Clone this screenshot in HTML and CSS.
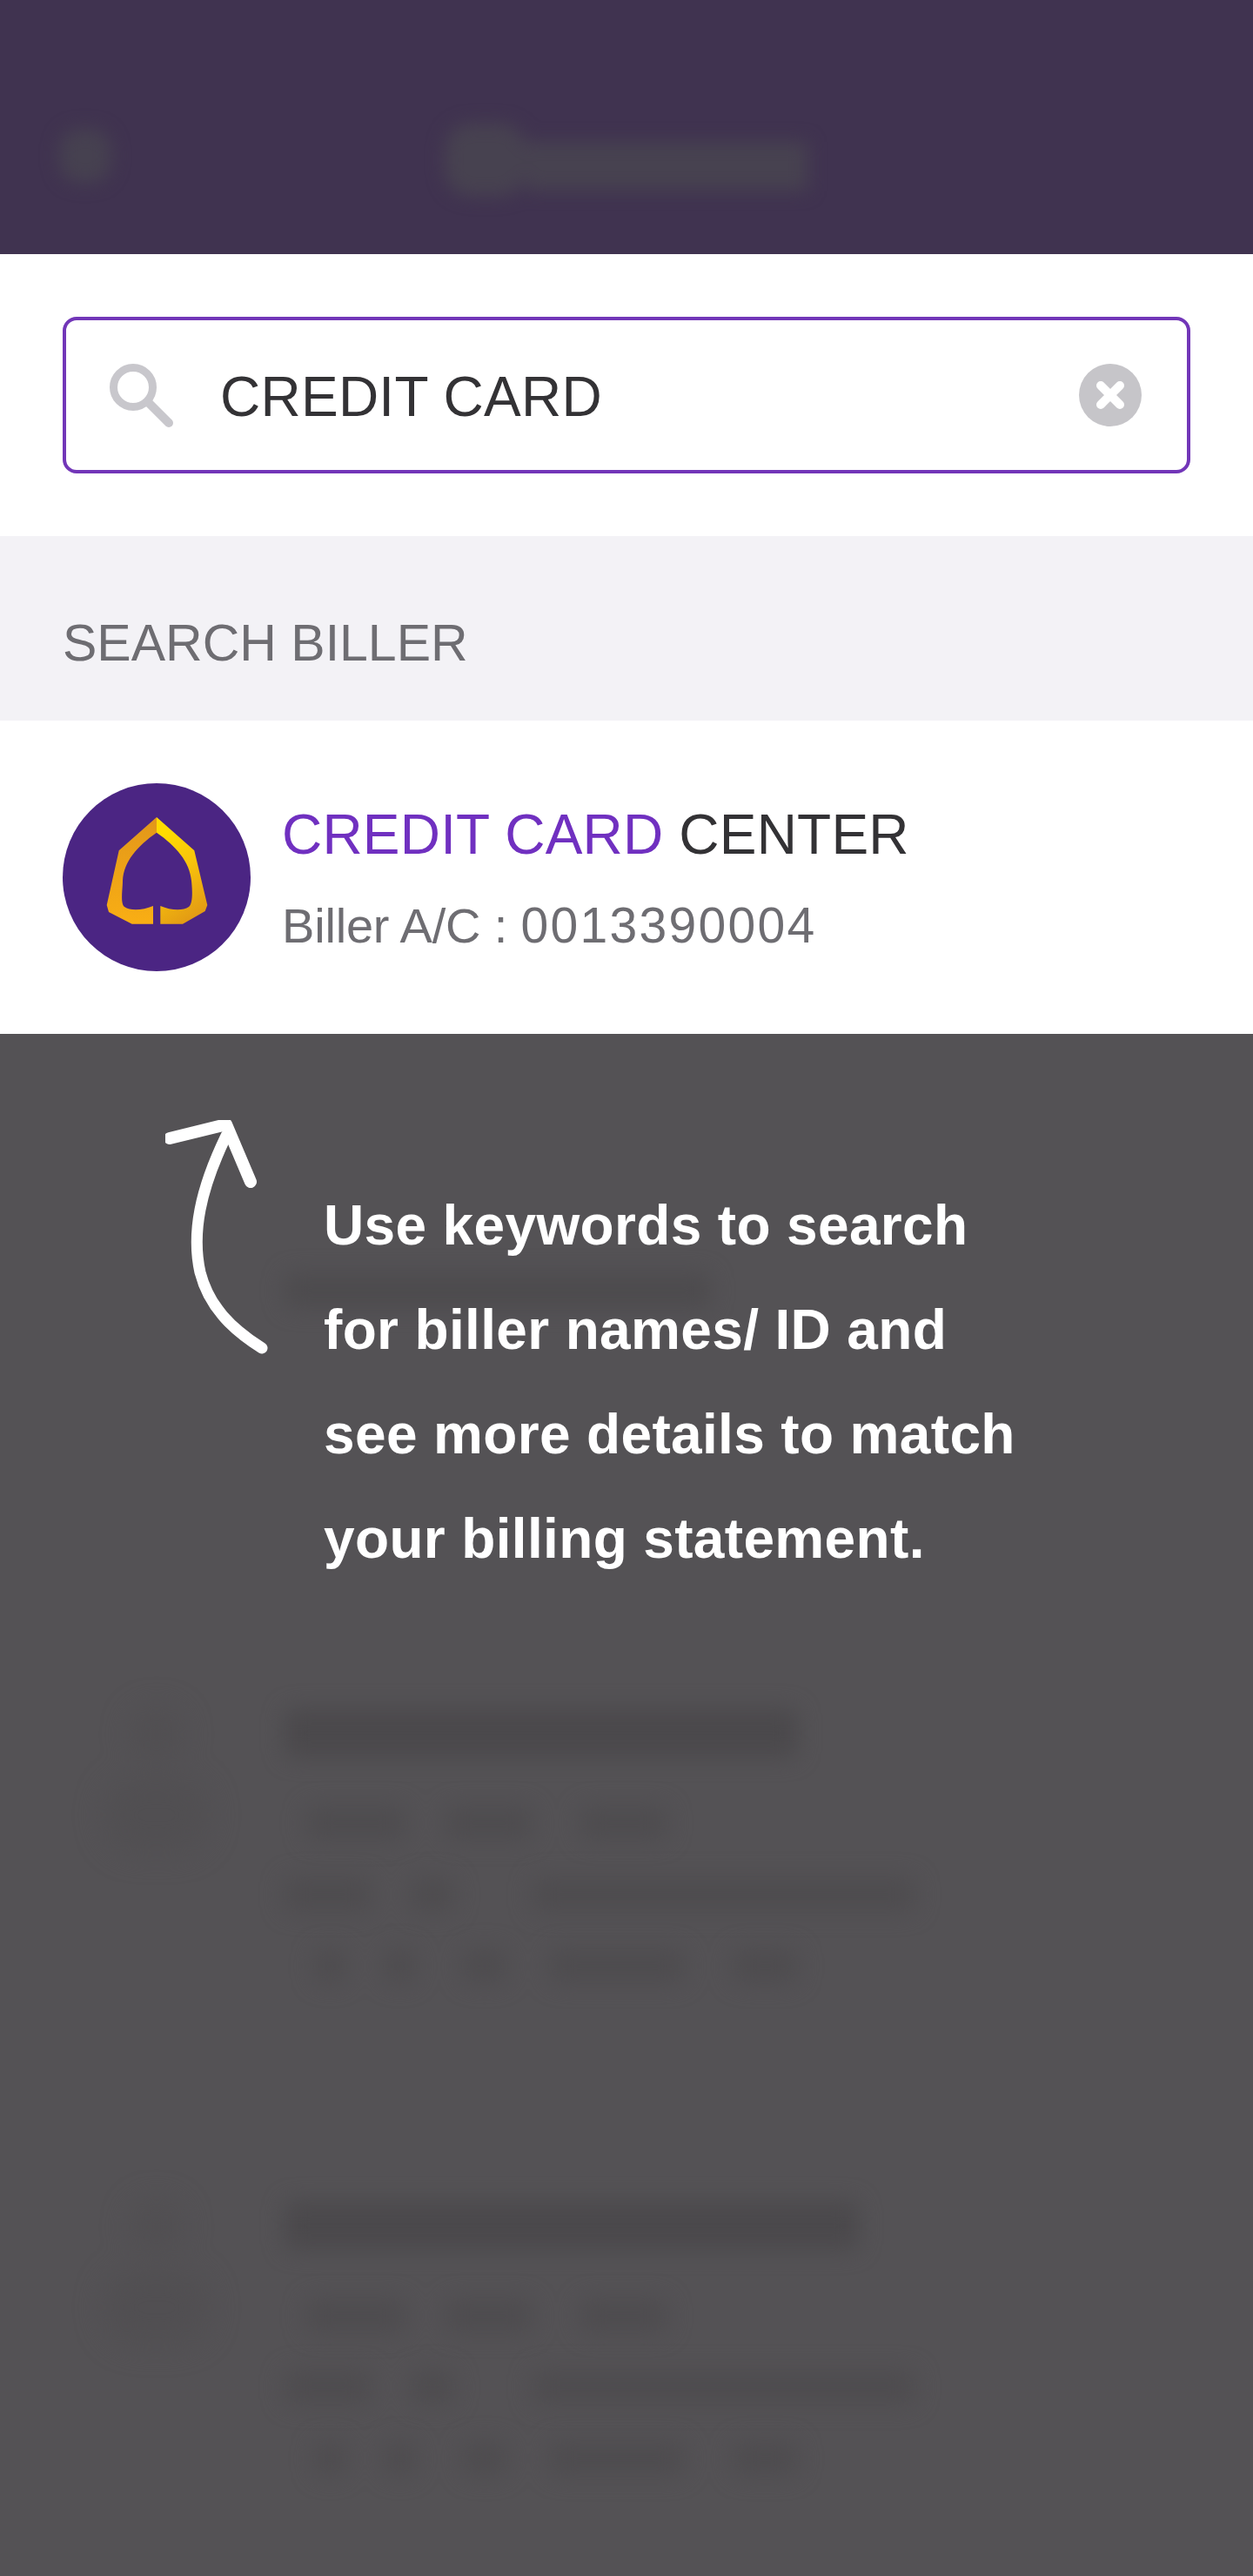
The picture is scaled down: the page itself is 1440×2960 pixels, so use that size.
FILE: index.html
```html
<!DOCTYPE html>
<html lang="en">
<head>
    <meta charset="UTF-8">
    <meta name="viewport" content="width=device-width, initial-scale=1.0">
    <title>Search Biller</title>
    <link rel="stylesheet" href="styles.css">
</head>
<body>
    <div class="screen">
        <header class="top-bar">
            <span class="back-blob"></span>
            <div class="title-blob">
                <span class="title-cap"></span>
                <span class="title-rest"></span>
            </div>
        </header>

        <div class="search-wrap">
            <div class="search-box">
                <svg class="search-icon" width="80" height="80" viewBox="0 0 80 80">
                    <circle cx="31" cy="31" r="22.5" fill="none" stroke="#c8c7cc" stroke-width="9"/>
                    <path d="M48 48 L72 72" fill="none" stroke="#c8c7cc" stroke-width="10" stroke-linecap="round"/>
                </svg>
                <span class="search-text">CREDIT CARD</span>
                <svg class="clear-icon" width="72" height="72" viewBox="0 0 72 72">
                    <circle cx="36" cy="36" r="36" fill="#c6c5c9"/>
                    <path d="M25 25 L47 47 M47 25 L25 47" fill="none" stroke="#fff" stroke-width="10" stroke-linecap="round"/>
                </svg>
            </div>
        </div>

        <div class="section-head">SEARCH BILLER</div>

        <div class="biller">
            <svg class="biller-logo" width="216" height="216" viewBox="0 0 216 216">
                <defs>
                    <linearGradient id="logo-left" x1="0" y1="0" x2="0" y2="1">
                        <stop offset="0" stop-color="#e2971a"/>
                        <stop offset="1" stop-color="#f9ae14"/>
                    </linearGradient>
                    <linearGradient id="logo-right" x1="0.3" y1="0.1" x2="0.6" y2="1">
                        <stop offset="0" stop-color="#ffdc00"/>
                        <stop offset="0.45" stop-color="#f8c30c"/>
                        <stop offset="1" stop-color="#e29a14"/>
                    </linearGradient>
                </defs>
                <circle cx="108" cy="108" r="108" fill="#4b2583"/>
                <path d="M108 39 L64.7 77.3 L50.7 140 L53 148 L79.7 161.7 L104 161.7 L104 141 C92 146 78 147 71 142 C66 138 69 122 69 112 C70 90 86 72 108 56.7 Z" fill="url(#logo-left)"/>
                <path d="M108 39 L151.3 77.3 L166.3 140 L163.7 147 L138 161.7 L112.3 161.7 L112.3 141 C124 146 138 147 145 142 C150 138 149 122 148 112 C146 90 130 72 108 56.7 Z" fill="url(#logo-right)"/>
            </svg>
            <div class="biller-info">
                <div class="biller-name"><span class="match">CREDIT CARD</span> CENTER</div>
                <div class="biller-account">Biller A/C : <span class="account-no">0013390004</span></div>
            </div>
        </div>

        <div class="dimmed">
            <div class="ghost-row row-one">
                <div class="ghost-lines">
                    <span class="ghost-title title-one"></span>
                </div>
            </div>
            <div class="ghost-row row-two">
                <div class="ghost-icon">
                    <span class="ghost-dot"></span>
                    <span class="ghost-body"></span>
                </div>
                <div class="ghost-lines">
                    <span class="ghost-title title-two"></span>
                    <div class="ghost-line">
                        <span class="seg seg-115 skip-25"></span>
                        <span class="seg seg-100 skip-45"></span>
                        <span class="seg seg-100 skip-55"></span>
                    </div>
                    <div class="ghost-line">
                        <span class="seg seg-100"></span>
                        <span class="seg seg-50 skip-45"></span>
                        <span class="seg seg-440 skip-90"></span>
                    </div>
                    <div class="ghost-line">
                        <span class="seg seg-35 skip-35"></span>
                        <span class="seg seg-35 skip-45"></span>
                        <span class="seg seg-50 skip-55"></span>
                        <span class="seg seg-155 skip-50"></span>
                        <span class="seg seg-75 skip-55"></span>
                    </div>
                </div>
            </div>
            <div class="ghost-row row-three">
                <div class="ghost-icon">
                    <span class="ghost-dot"></span>
                    <span class="ghost-body"></span>
                </div>
                <div class="ghost-lines">
                    <span class="ghost-title title-three"></span>
                    <div class="ghost-line">
                        <span class="seg seg-115 skip-25"></span>
                        <span class="seg seg-100 skip-45"></span>
                        <span class="seg seg-100 skip-55"></span>
                    </div>
                    <div class="ghost-line">
                        <span class="seg seg-100"></span>
                        <span class="seg seg-50 skip-45"></span>
                        <span class="seg seg-440 skip-90"></span>
                    </div>
                    <div class="ghost-line">
                        <span class="seg seg-35 skip-35"></span>
                        <span class="seg seg-35 skip-45"></span>
                        <span class="seg seg-50 skip-55"></span>
                        <span class="seg seg-155 skip-50"></span>
                        <span class="seg seg-75 skip-55"></span>
                    </div>
                </div>
            </div>

            <div class="tip">
                <svg class="tip-arrow" width="130" height="280" viewBox="0 0 130 280">
                    <path d="M70 18 C40 80 30 130 40 175 C50 214 76 240 111 262" fill="none" stroke="#fff" stroke-width="13" stroke-linecap="round"/>
                    <path d="M5 21 L70 5 L98 71" fill="none" stroke="#fff" stroke-width="14" stroke-linecap="round" stroke-linejoin="round"/>
                </svg>
                <p class="tip-text">Use keywords to search<br>for biller names/ ID and<br>see more details to match<br>your billing statement.</p>
            </div>
        </div>
    </div>
</body>
</html>
```

FILE: styles.css
```css
html, body {
    margin: 0;
    padding: 0;
}
body {
    font-family: "Liberation Sans", Arial, sans-serif;
    background-color: #fff;
}
.screen {
    width: 1440px;
    height: 2960px;
    display: flex;
    flex-direction: column;
    overflow: hidden;
}

/* top bar, out of focus behind the dim layer */
.top-bar {
    height: 292px;
    flex: none;
    box-sizing: border-box;
    padding-top: 142px;
    background-color: #403350;
    display: flex;
    align-items: flex-start;
}
.back-blob {
    width: 60px;
    height: 62px;
    margin-left: 68px;
    margin-top: 6px;
    background-color: #464150;
    border-radius: 24px;
    filter: blur(10px);
}
.title-blob {
    display: flex;
    align-items: flex-end;
    height: 83px;
    margin-left: 383px;
    filter: blur(10px);
}
.title-cap {
    width: 94px;
    height: 83px;
    background-color: #474250;
    border-radius: 30px;
}
.title-rest {
    width: 323px;
    height: 56px;
    margin-bottom: 6px;
    background-color: #474250;
}

/* search field */
.search-wrap {
    height: 324px;
    flex: none;
    padding: 72px 72px 0;
    box-sizing: border-box;
}
.search-box {
    height: 180px;
    box-sizing: border-box;
    border: 4px solid #7236b8;
    border-radius: 16px;
    display: flex;
    align-items: center;
    padding: 0 52px 0 46px;
}
.search-icon {
    flex: none;
}
.search-text {
    font-size: 64px;
    letter-spacing: 0.25px;
    color: #333235;
    margin-left: 51px;
    margin-top: 4px;
    flex: 1;
}
.clear-icon {
    flex: none;
}

.section-head {
    height: 212px;
    flex: none;
    box-sizing: border-box;
    background-color: #f3f2f6;
    color: #6e6d72;
    font-size: 59px;
    padding: 88px 72px 0;
    line-height: 70px;
}

/* result row */
.biller {
    height: 360px;
    flex: none;
    box-sizing: border-box;
    padding: 72px;
    display: flex;
    align-items: center;
    gap: 36px;
}
.biller-logo {
    flex: none;
}
.biller-name {
    font-size: 64px;
    letter-spacing: 0.2px;
    line-height: 76px;
    margin-top: 2px;
    color: #333235;
}
.match {
    color: #7030c0;
}
.biller-account {
    font-size: 56px;
    letter-spacing: -0.2px;
    line-height: 68px;
    margin-top: 32px;
    color: #6e6d72;
}
.account-no {
    font-size: 57px;
    letter-spacing: 2.3px;
}

/* blurred list under the dim layer */
.dimmed {
    flex: 1;
    background-color: #545255;
    position: relative;
    overflow: hidden;
    padding-top: 275px;
}
.ghost-row {
    display: flex;
    position: relative;
    padding-left: 327px;
}
.row-one {
    height: 500px;
}
.row-two {
    height: 566px;
}
.ghost-icon {
    position: absolute;
    left: 120px;
    top: 0;
    width: 120px;
    display: flex;
    flex-direction: column;
    align-items: center;
    gap: 20px;
    filter: blur(16px);
}
.ghost-dot {
    width: 60px;
    height: 60px;
    border-radius: 50%;
    background-color: #514f52;
}
.ghost-body {
    width: 120px;
    height: 85px;
    border-radius: 40px;
    background-color: #514f52;
}
.ghost-lines {
    display: flex;
    flex-direction: column;
    gap: 44px;
}
.ghost-title {
    display: block;
    height: 57px;
    margin-bottom: 12px;
    background-color: #4b494c;
    border-radius: 12px;
    filter: blur(12px);
}
.title-one {
    width: 490px;
    height: 40px;
    background-color: #4d4b4e;
}
.title-two {
    width: 590px;
}
.title-three {
    width: 660px;
}
.ghost-line {
    display: flex;
    height: 38px;
    filter: blur(13px);
}
.seg {
    display: block;
    height: 100%;
    border-radius: 10px;
    background-color: #4e4c4f;
}
.seg-35 { width: 35px; }
.seg-50 { width: 50px; }
.seg-75 { width: 75px; }
.seg-100 { width: 100px; }
.seg-115 { width: 115px; }
.seg-155 { width: 155px; }
.seg-440 { width: 440px; }
.skip-25 { margin-left: 25px; }
.skip-35 { margin-left: 35px; }
.skip-45 { margin-left: 45px; }
.skip-50 { margin-left: 50px; }
.skip-55 { margin-left: 55px; }
.skip-90 { margin-left: 90px; }

/* coach mark on top of the dim layer */
.tip {
    position: absolute;
    left: 0;
    top: 0;
    width: 100%;
}
.tip-arrow {
    position: absolute;
    left: 190px;
    top: 99px;
}
.tip-text {
    position: absolute;
    left: 372px;
    top: 160px;
    margin: 0;
    width: 900px;
    color: #fff;
    font-size: 64px;
    font-weight: bold;
    letter-spacing: 0.35px;
    line-height: 120px;
}
```
